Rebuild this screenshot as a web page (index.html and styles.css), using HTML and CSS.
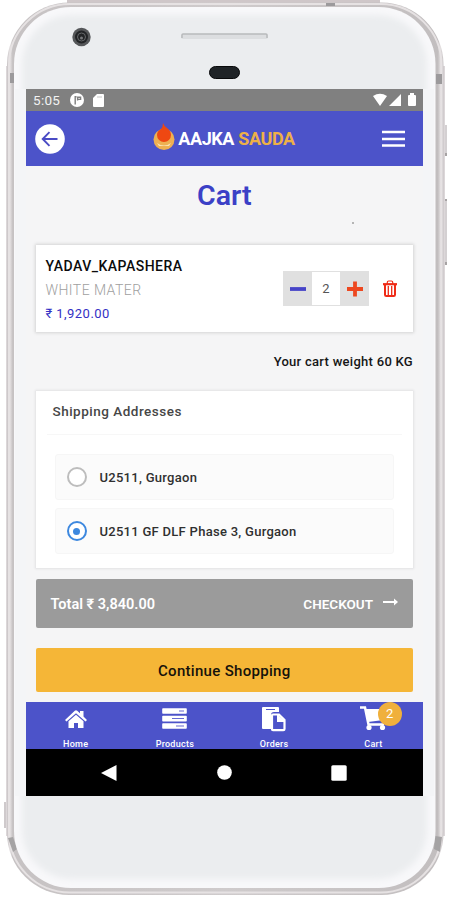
FILE: index.html
```html
<!DOCTYPE html>
<html lang="en">
<head>
<meta charset="utf-8">
<title>Aajka Sauda - Cart</title>
<link rel="stylesheet" href="styles.css">
</head>
<body>
<div class="device">
  <svg class="frame" width="450" height="900" viewBox="0 0 450 900" aria-hidden="true">
    <defs>
      <linearGradient id="rim" x1="0" x2="1" y1="0" y2="0">
        <stop offset="0" stop-color="#c9c4c6"/><stop offset=".007" stop-color="#e4e0e1"/><stop offset=".013" stop-color="#c6c2c3"/>
        <stop offset=".5" stop-color="#cfcbcc"/>
        <stop offset=".987" stop-color="#c2bebf"/><stop offset=".993" stop-color="#e2dedf"/><stop offset="1" stop-color="#c6c1c3"/>
      </linearGradient>
      <filter id="soft"><feGaussianBlur stdDeviation="3"/></filter>
    </defs>
    <rect x="67" y="0" width="313" height="6" fill="#cfc7c9"/>
    <path d="M443 125h4v30h-4zM443 200h4v63h-4zM442 713h3v119h-3z" fill="#d4d0d2"/>
    <path d="M443 153h4v3h-4zM443 199h4v2h-4zM443 262h4v3h-4z" fill="#a7a3a4"/>
    <path d="M4 802h4v26h-4z" fill="#cfcacc"/>
    <path d="M6 66h2v770h-2zM442 66h3v770h-3z" fill="#dcd7d9"/>
    <rect x="7" y="2.500" width="436.500" height="892.500" rx="62" fill="url(#rim)"/>
    <rect x="9" y="4" width="432.500" height="888.500" rx="61" fill="none" stroke="#e6e2e3" stroke-width="2"/>
    <path d="M10 73h4v10h-4zM436 74h6v10h-6zM326 3h9v3h-9z" fill="#9c9a9c"/>
    <path d="M8 838l5-1 4 12-4 3zM442 837l-7-1-1 13 6 3z" fill="#a5a3a4"/>
    <rect x="14" y="7" width="421.500" height="881" rx="57" fill="#f8f8fa"/>
    <rect x="22" y="15" width="405" height="864" rx="50" fill="#ebedef" filter="url(#soft)"/>
    <path d="M15 89h11v707h-11zM423 89h11v707h-11z" fill="#f4f5f7"/>
    <circle cx="81.500" cy="37" r="9.200" fill="#555759"/>
    <circle cx="81.500" cy="37" r="6.500" fill="#222426"/>
    <circle cx="81.500" cy="37" r="4" fill="none" stroke="#66686a"/>
    <circle cx="81.500" cy="38" r="1.500" fill="#77797b"/>
    <rect x="181" y="34" width="87" height="5" rx="2" fill="#dcdee0"/>
    <path d="M182 38v-3q0-1 1-1h83q1 0 1 1v3" fill="none" stroke="#b8babc" stroke-width="1.500"/>
    <rect x="209.500" y="66.500" width="30" height="12" rx="6" fill="#1f2326" stroke="#08090a"/>
  </svg>

  <main class="screen">
    <div class="status">
      <span class="clock">5:05</span>
      <svg class="status-app" width="14" height="14" viewBox="0 0 14 14"><circle cx="7" cy="7" r="7" fill="#fff"/><path d="M5.200 3v8.500M4.500 3.800h2M7.600 7.500V4.200h3v2.200H8" fill="none" stroke="#808080" stroke-width="1.400"/></svg>
      <svg class="status-sd" width="11" height="13" viewBox="0 0 11 13"><path d="M4 0h6q1 0 1 1v11q0 1-1 1H1q-1 0-1-1V4z" fill="#fff"/><path d="M4 3h5" stroke="#c5c5c5"/></svg>
      <svg class="status-right" width="43" height="14" viewBox="0 0 43 14"><path d="M0 3Q7-1.500 14 3L7 13zM16 13L28 1v12zM36 2h1V0h4v2h1q1 0 1 1v9q0 1-1 1h-6q-1 0-1-1V3q0-1 1-1z" fill="#fff"/></svg>
    </div>

    <header class="topbar">
      <svg width="30" height="30" viewBox="0 0 30 30"><circle cx="15" cy="15" r="14.800" fill="#fff"/><path d="M22.500 15H8M14.500 8.200L7.700 15l6.800 6.800" fill="none" stroke="#4a4bc5" stroke-width="1.900"/></svg>
      <div class="brand">
        <svg width="22" height="28" viewBox="0 0 22 28"><circle cx="11" cy="16.500" r="10.500" fill="#eeb052"/><path d="M4 20q7 5 14 0l-2 3H6z" fill="#fbe3b4"/><path d="M10 0q1 3 4 5 4 3 4 7a7 7 0 0 1-14 0q0-4 4-6 2-2 2-6z" fill="#ef4812"/></svg>
        <span class="brand-text">AAJKA <b>SAUDA</b></span>
      </div>
      <svg width="23" height="18" viewBox="0 0 23 18"><path d="M0 2h23M0 9h23M0 15.500h23" stroke="#fff" stroke-width="2.500"/></svg>
    </header>

    <section class="content">
      <h1>Cart<i class="speck"></i></h1>
      <article class="item">
        <div class="item-text">
          <div class="item-name">YADAV_KAPASHERA</div>
          <div class="item-kind">WHITE MATER</div>
          <div class="item-price">₹ 1,920.00</div>
        </div>
        <div class="stepper">
          <span class="step"><svg width="16" height="16" viewBox="0 0 16 16"><path d="M0 8h16" stroke="#4744c8" stroke-width="3.800"/></svg></span>
          <span class="qty">2</span>
          <span class="step"><svg width="16" height="16" viewBox="0 0 16 16"><path d="M0 8h16M8 .5v15" stroke="#ed4820" stroke-width="3.800"/></svg></span>
        </div>
        <svg class="trash" width="14" height="17" viewBox="0 0 14 17"><path d="M0 4.200h14" stroke="#ef2b16" stroke-width="2.200"/><path d="M4.300 4V2.300q0-1.300 1.300-1.300h2.800q1.300 0 1.300 1.300V4" fill="none" stroke="#ef2b16" stroke-width="1.200"/><path d="M2 4v10.700q0 1.300 1.300 1.300h7.400q1.300 0 1.300-1.300V4" fill="none" stroke="#ef2b16" stroke-width="2"/><path d="M5.300 6v9M8.700 6v9" stroke="#ef2b16" stroke-width="1.300"/></svg>
      </article>

      <div class="weight">Your cart weight 60 KG</div>

      <section class="shipping">
        <h2>Shipping Addresses</h2>
        <div class="address"><i class="radio"></i><span>U2511, Gurgaon</span></div>
        <div class="address"><i class="radio on"></i><span>U2511 GF DLF Phase 3, Gurgaon</span></div>
      </section>

      <div class="total">
        <span class="sum">Total ₹ 3,840.00</span>
        <span class="checkout">CHECKOUT</span>
        <svg width="15" height="8" viewBox="0 0 15 8"><path d="M0 4h12" stroke="#fff" stroke-width="2"/><path d="M11 .5L15 4l-4 3.500z" fill="#fff"/></svg>
      </div>
      <div class="continue"><span>Continue Shopping</span></div>
    </section>

    <nav class="tabs">
      <div class="tab"><svg width="22" height="26" viewBox="0 0 22 26"><path d="M0 14L9.800 4.700q1.200-1 2.400 0L15 7.300V5h3.500v5.600L22 14l-1.500 1.500L11 7.200 1.500 15.500z" fill="#fff"/><path d="M3.500 15.200L11 8.800l7.500 6.400V22H13v-5H9v5H3.500z" fill="#fff"/></svg><span>Home</span></div>
      <div class="tab"><svg width="25" height="26" viewBox="0 0 25 26"><path d="M1 3h23v4H1zM1 10.500h23v4.200H1zM1 18h23v4H1z" fill="#fff" stroke="#fff" stroke-width="1.600" stroke-linejoin="round"/><path d="M17 5h5M10 12.500h12M14 20h8" stroke="#6668d1" stroke-width="1.200"/></svg><span>Products</span></div>
      <div class="tab"><svg width="24" height="26" viewBox="0 0 24 26"><path d="M0 2q0-1 1-1h15q1 0 1 1v4h-5q-3 0-3 3v14H1q-1 0-1-1z" fill="#fff"/><path d="M4 3.500h9" stroke="#4c53c9"/><path d="M11 8.500h6l5.500 5.500v9q0 1.200-1.200 1.200H11q-1 0-1-1V9.500q0-1 1-1z" fill="#4c53c9" stroke="#fff" stroke-width="2.200"/><path d="M16 9v6h7" fill="#fff" stroke="#fff" stroke-width="2"/></svg><span>Orders</span></div>
      <div class="tab"><svg width="26" height="26" viewBox="0 0 26 26"><path d="M0 1.500h5L8.500 18.500H24" fill="none" stroke="#fff" stroke-width="2.500"/><path d="M5 3h21l-2.500 11L8 16z" fill="#fff"/><circle cx="9" cy="21.500" r="2.600" fill="#fff"/><circle cx="22.500" cy="21.500" r="2.600" fill="#fff"/></svg><span>Cart</span><em class="badge">2</em></div>
    </nav>

    <div class="android">
      <svg width="16" height="18" viewBox="0 0 16 18"><path d="M15.500 1v16L0 9z" fill="#fff"/></svg>
      <svg width="15" height="15" viewBox="0 0 15 15"><circle cx="7.500" cy="7.500" r="7.300" fill="#fff"/></svg>
      <svg width="16" height="16" viewBox="0 0 16 16"><rect x=".3" y=".3" width="15.400" height="15.400" rx="1.500" fill="#fff"/></svg>
    </div>
  </main>
</div>
</body>
</html>
```
FILE: styles.css
```css
* { box-sizing: border-box; }
body { margin: 0; background: #fff; font-family: Roboto, "Liberation Sans", sans-serif; overflow: hidden; }
svg { display: block; flex: none; }
.device { display: grid; width: 450px; height: 900px; }
.frame, .screen { grid-area: 1 / 1; }
.screen { margin: 89px 0 0 26px; width: 397px; height: 707px; display: flex; flex-direction: column; background: #f5f5f6; white-space: nowrap; }

.status { height: 22px; background: #808080; display: flex; align-items: center; padding: 0 7px; color: #fff; }
.clock { font-size: 13.500px; letter-spacing: .3px; width: 37px; color: #f2f2f2; }
.status-sd { margin-left: 9px; }
.status-right { margin-left: auto; }

.topbar { height: 55px; background: #4c53c9; display: flex; align-items: center; justify-content: space-between; padding: 0 18px 0 9px; }
.brand { display: flex; align-items: center; gap: 3px; margin-left: 1px; }
.brand svg { margin-top: -3px; }
.brand-text { color: #fff; font-size: 18px; font-weight: 700; letter-spacing: -.38px; }
.brand-text b { color: #edb047; font-weight: 700; }

.content { height: 536px; padding: 0 10px 0 9.500px; display: flex; flex-direction: column; }
h1 { position: relative; margin: 0; height: 79px; line-height: 60px; text-align: center; font-size: 28.500px; font-weight: 600; color: #3b40c6; }
.speck { position: absolute; left: 316px; top: 56px; width: 2px; height: 2px; background: #b5b5b5; }
.item { height: 87px; background: #fff; box-shadow: 0 0 3px 1px #d4d4d4; display: flex; align-items: center; padding: 2px 16px 0 10px; }
.item-text { flex: 1; line-height: 24px; }
.item-name { font-size: 14px; font-weight: 500; letter-spacing: .48px; color: #0c0c0c; }
.item-kind { font-size: 14px; letter-spacing: .45px; color: #a0a0a0; font-weight: 300; }
.item-price { font-size: 13px; letter-spacing: .45px; color: #3330c4; }
.stepper { display: flex; width: 86px; height: 35px; margin-top: -2px; background: #e0e0e0; }
.step { width: 29px; display: flex; align-items: center; justify-content: center; }
.qty { flex: 1; margin: 1px 0; background: #fff; text-align: center; line-height: 34px; font-size: 13px; color: #555; }
.trash { margin: -2px 0 0 14px; }
.weight { height: 59px; line-height: 60px; text-align: right; font-size: 13px; font-weight: 500; letter-spacing: .28px; color: #161616; }
.shipping { height: 177px; background: #fff; box-shadow: 0 0 2px 1px #e2e2e3; padding: 0 19px; }
h2 { margin: 0 -8px 19px; padding: 0 6px; height: 44px; line-height: 40px; font-size: 13.500px; font-weight: 500; letter-spacing: .5px; color: #464646; border-bottom: 1px solid #f7f7f7; }
.address { height: 46px; margin-bottom: 8px; background: #fbfbfb; border: 1px solid #f6f6f6; border-radius: 3px; display: flex; align-items: center; padding-left: 11px; gap: 13px; font-size: 13px; font-weight: 500; letter-spacing: .28px; color: #303030; }
.radio { width: 20px; height: 20px; border: 2px solid #bdbdbd; border-radius: 50%; display: grid; place-items: center; background: #fff; }
.radio.on { border-color: #3d88df; }
.radio.on::after { content: ""; width: 7px; height: 7px; border-radius: 50%; background: #3d88df; }
.total { margin-top: 11px; height: 49px; background: #9b9b9b; border-radius: 2px; color: #fff; display: flex; align-items: center; padding: 2px 15px 0; }
.sum { flex: 1; font-size: 14.500px; font-weight: 600; }
.checkout { font-size: 13.500px; font-weight: 600; margin: -2px 10px 0 0; }
.total svg { margin-top: -6px; }
.continue { margin-top: 20px; height: 44px; line-height: 47px; text-align: center; background: #f5b637; border-radius: 2px; font-size: 15px; font-weight: 500; letter-spacing: .3px; color: #15120b; }

.tabs { height: 47px; background: #4c53c9; display: grid; grid-template-columns: repeat(4, 1fr); padding-top: 4px; color: #fff; }
.tab { display: flex; flex-direction: column; align-items: center; position: relative; font-size: 9px; font-weight: 500; letter-spacing: .25px; line-height: 11px; }
.tab span { margin-top: 7px; }
.badge { position: absolute; left: 54px; top: -4px; width: 24px; height: 24px; border-radius: 50%; background: #f0b03c; font-style: normal; font-size: 13px; font-weight: 400; line-height: 24px; text-align: center; }
.android { height: 47px; background: #000; display: flex; align-items: center; justify-content: space-between; padding: 0 76px 0 75px; }
```
